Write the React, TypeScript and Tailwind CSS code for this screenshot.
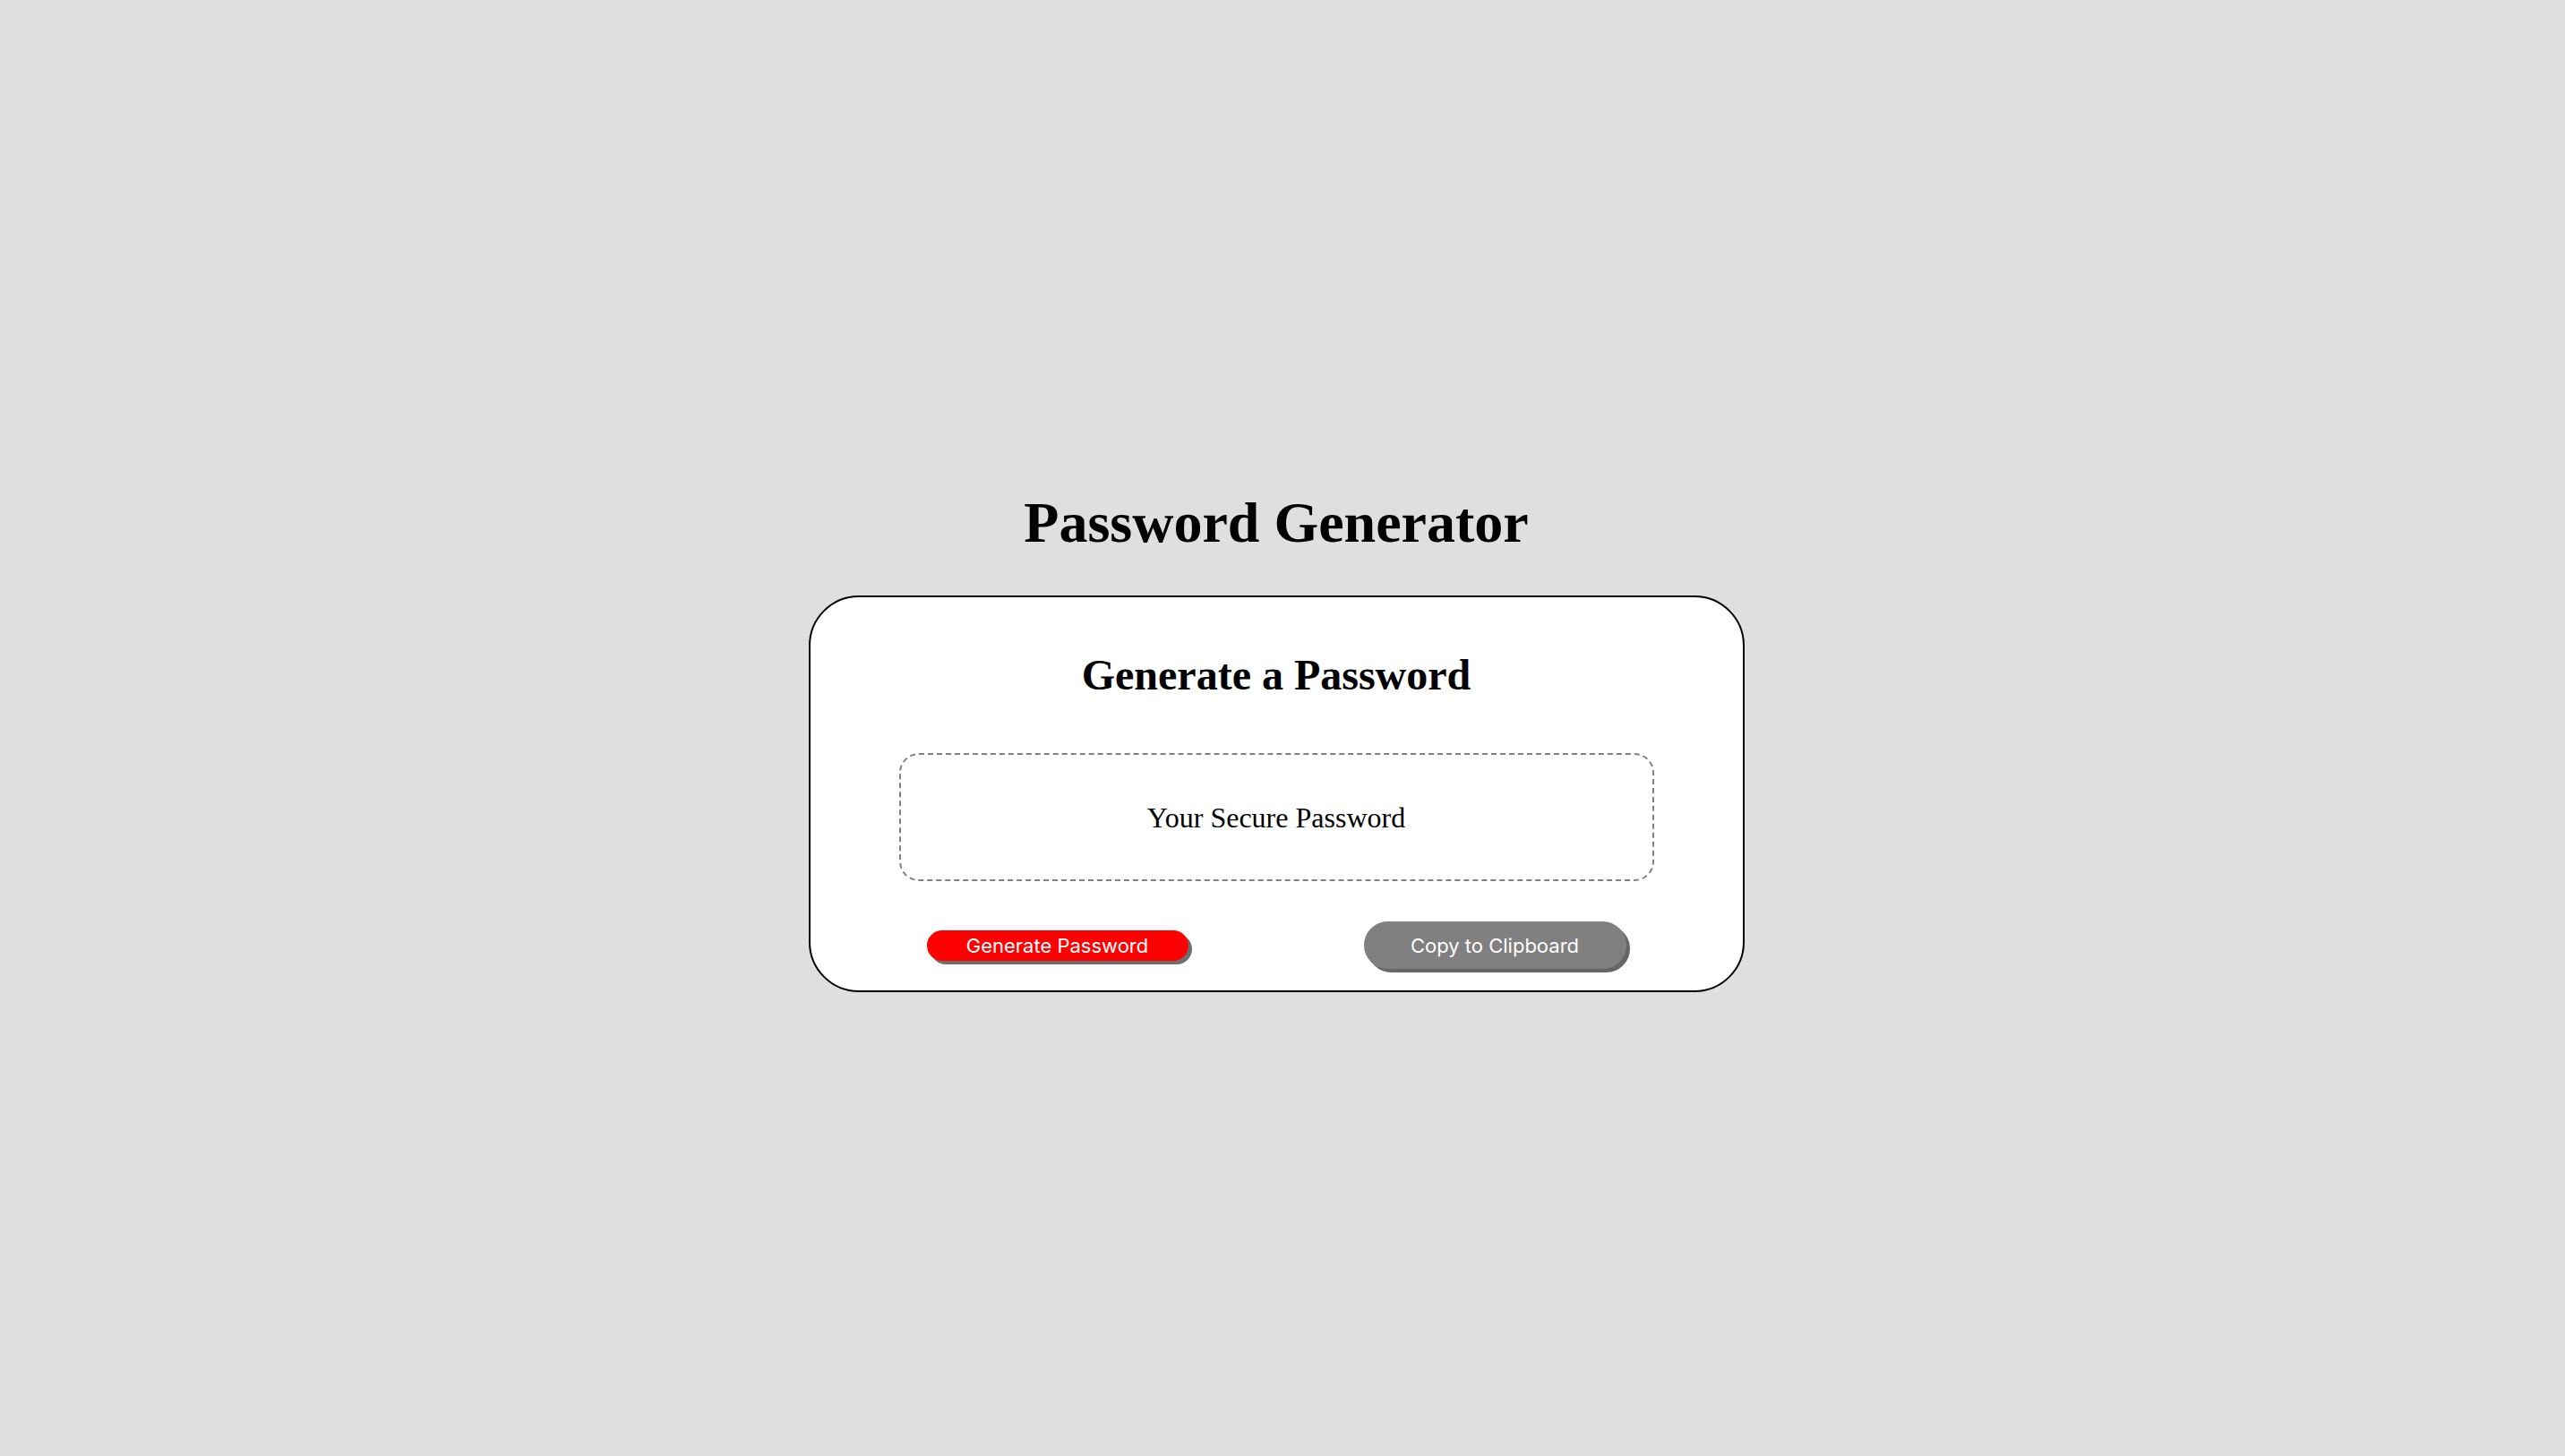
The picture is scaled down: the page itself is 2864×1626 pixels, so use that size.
import React from "react";

export default function App() {
  return (
    <div className="min-h-screen w-full bg-[#dfdfdf] pr-[14px] pt-[548px] flex flex-col items-center">
      <h1 className="m-0 text-[64px] leading-[71px] font-bold text-black [font-family:'Liberation_Serif','Times_New_Roman',serif]">
        Password Generator
      </h1>
      <div className="mt-[46px] w-[1045px] h-[443px] bg-white border-2 border-black rounded-[56px] flex flex-col items-center pt-[60px]">
        <h2 className="m-0 text-[48px] leading-[53px] font-bold text-black [font-family:'Liberation_Serif','Times_New_Roman',serif]">
          Generate a Password
        </h2>
        <div className="mt-[61px] w-[843px] h-[143px] border-2 border-dashed border-[#808080] rounded-[22px] flex items-center justify-center">
          <span className="text-[32px] text-black [font-family:'Liberation_Serif','Times_New_Roman',serif]">
            Your Secure Password
          </span>
        </div>
        <div className="mt-[45px] w-[843px] px-[31px] flex items-center justify-between">
          <button className="w-[292px] h-[34px] rounded-full bg-[#ff0000] text-white text-[22px] leading-none shadow-[4px_4px_0_#6e6e6e] [font-family:'Inter','Liberation_Sans',sans-serif]">
            Generate Password
          </button>
          <button className="w-[293px] h-[53px] rounded-full bg-[#808080] text-white text-[22px] leading-none shadow-[4px_4px_0_#666666] [font-family:'Inter','Liberation_Sans',sans-serif]">
            Copy to Clipboard
          </button>
        </div>
      </div>
    </div>
  );
}
